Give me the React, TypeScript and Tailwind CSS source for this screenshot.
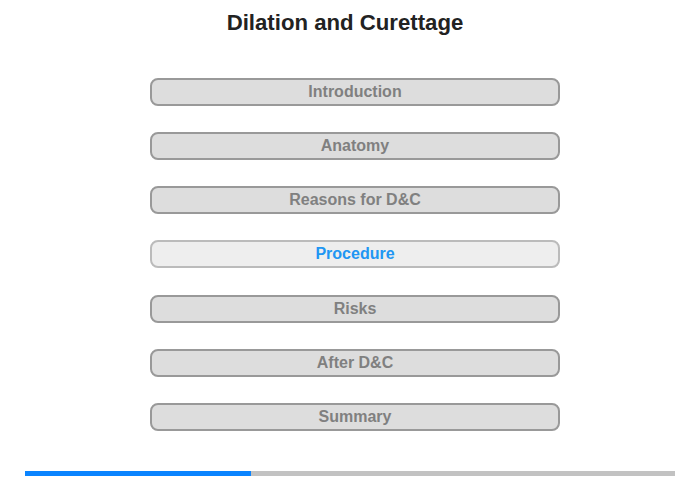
import React from "react";

const items = ["Introduction", "Anatomy", "Reasons for D&C", "Procedure", "Risks", "After D&C", "Summary"];

export default function App() {
  return (
    <div className="w-[700px] h-[480px] bg-white flex flex-col items-center" style={{ fontFamily: '"Liberation Sans", Arial, sans-serif' }}>
      <h1 className="mt-[9px] mr-[10px] h-[28px] leading-[28px] text-[22.2px] font-bold text-[#222222]">Dilation and Curettage</h1>
      <div className="mt-[41px] ml-[10px] flex flex-col gap-[26.15px]">
        {items.map((t) => {
          const active = t === "Procedure";
          return (
            <div
              key={t}
              className={
                active
                  ? "w-[410px] h-[28px] rounded-[8px] border-2 border-[#bbbbbb] bg-[#eeeeee] flex items-center justify-center text-[16px] font-bold text-[#2196f3]"
                  : "w-[410px] h-[28px] rounded-[8px] border-2 border-[#999999] bg-[#dddddd] flex items-center justify-center text-[16px] font-bold text-[#808080]"
              }
            >
              {t}
            </div>
          );
        })}
      </div>
      <div className="mt-[40px] w-[650px] h-[5px] bg-[#c2c2c2] flex">
        <div className="w-[226px] h-full bg-[#0a84ff]" />
      </div>
    </div>
  );
}
